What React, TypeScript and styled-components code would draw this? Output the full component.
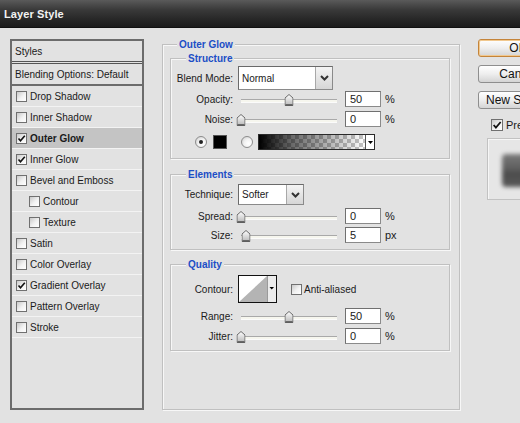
import * as React from 'react'
import styled, { createGlobalStyle, css } from 'styled-components'

const GlobalStyle = createGlobalStyle`
  html, body {
    margin: 0;
    padding: 0;
    background: #e2e2e2;
    overflow: hidden;
  }
  body {
    font-family: "Liberation Sans", Arial, sans-serif;
    font-size: 10px;
    color: #1a1a1a;
  }
`

const Window = styled.div`
  width: 520px;
  height: 423px;
  overflow: hidden;
  background: #e2e2e2;
`

const TitleBar = styled.div`
  height: 28px;
  box-sizing: border-box;
  padding-left: 4px;
  display: flex;
  align-items: center;
  background: linear-gradient(#5a5a5a 0%, #3a3a3a 35%, #282828 70%, #1c1c1c 100%);
  border-bottom: 1px solid #111;
  color: #f2f2f2;
  font-weight: bold;
  font-size: 11px;
  letter-spacing: 0.1px;
`

const Body = styled.div`
  display: flex;
  align-items: flex-start;
  padding: 11px 0 0 10px;
`

// left column
const StyleList = styled.div`
  flex-shrink: 0;
  width: 134px;
  height: 371px;
  box-sizing: border-box;
  border: 2px solid #6c6c6c;
  background: #e2e2e2;
`

const ListHeader = styled.div`
  height: 20px;
  padding-left: 3px;
  display: flex;
  align-items: center;
  border-bottom: 3px double #555;
`

const BlendRow = styled.div`
  height: 20px;
  padding-left: 3px;
  display: flex;
  align-items: center;
  border-bottom: 2px solid #6c6c6c;
`

const StyleItem = styled.div<{ $selected?: boolean; $indent?: boolean }>`
  height: 20px;
  display: flex;
  align-items: center;
  gap: 3px;
  padding-left: ${(p) => (p.$indent ? 17 : 4)}px;
  border-bottom: 1px solid #f3f3f3;
  background: ${(p) => (p.$selected ? '#c4c4c4' : 'transparent')};
  font-weight: ${(p) => (p.$selected ? 'bold' : 'normal')};
`

const CheckBoxBox = styled.span<{ $size?: number }>`
  flex-shrink: 0;
  width: ${(p) => p.$size ?? 11}px;
  height: ${(p) => p.$size ?? 11}px;
  box-sizing: border-box;
  border: 1px solid #707070;
  background: linear-gradient(135deg, #c9c9c9 0%, #f2f2f2 55%, #ffffff 100%);
  display: flex;
  align-items: center;
  justify-content: center;
`

function CheckBox({ checked, size }: { checked?: boolean; size?: number }) {
  const s = size ?? 11
  return (
    <CheckBoxBox $size={s}>
      {checked && (
        <svg width={s - 2} height={s - 2} viewBox="0 0 9 9">
          <polyline points="1.5,4.5 3.5,6.8 7.8,1.8" fill="none" stroke="#111" strokeWidth="1.6" />
        </svg>
      )}
    </CheckBoxBox>
  )
}

// main panel
const MainGroup = styled.div`
  flex-shrink: 0;
  margin: 5px 0 0 18px;
  width: 298px;
  height: 366px;
  box-sizing: border-box;
  border: 1px solid #c0c0c0;
  box-shadow: 1px 1px 0 #f7f7f7, inset 1px 1px 0 #f7f7f7;
`

const Legend = styled.div<{ $indent: number }>`
  display: table;
  margin: -7px 0 0 ${(p) => p.$indent}px;
  padding: 0 2px;
  line-height: 13px;
  background: #e2e2e2;
  color: #1c4ec6;
  font-weight: bold;
`

const Group = styled.div<{ $top: number; $bottom: number }>`
  margin: ${(p) => p.$top}px 0 0 7px;
  width: 280px;
  box-sizing: border-box;
  padding-bottom: ${(p) => p.$bottom}px;
  border: 1px solid #c0c0c0;
  box-shadow: 1px 1px 0 #f7f7f7, inset 1px 1px 0 #f7f7f7;
`

const Row = styled.div<{ $h: number; $mt: number; $pl?: number }>`
  display: flex;
  align-items: center;
  height: ${(p) => p.$h}px;
  margin-top: ${(p) => p.$mt}px;
  padding-left: ${(p) => p.$pl ?? 0}px;
`

const Label = styled.span`
  width: 62px;
  margin-right: 5px;
  text-align: right;
  white-space: nowrap;
`

const SelectBox = styled.div<{ $w: number }>`
  width: ${(p) => p.$w}px;
  height: 100%;
  box-sizing: border-box;
  display: flex;
  background: #fff;
  border: 1px solid #8a8a8a;
  border-top-color: #6a6a6a;
  border-left-color: #6a6a6a;
`

const SelectText = styled.span`
  flex: 1;
  display: flex;
  align-items: center;
  padding-left: 3px;
`

const SelectButton = styled.span`
  width: 16px;
  display: flex;
  align-items: center;
  justify-content: center;
  background: linear-gradient(#f4f4f4, #d6d6d6);
  border-left: 1px solid #a8a8a8;
`

function Select({ value, width }: { value: string; width: number }) {
  return (
    <SelectBox $w={width}>
      <SelectText>{value}</SelectText>
      <SelectButton>
        <svg width="9" height="6" viewBox="0 0 9 6">
          <polyline points="1,1 4.5,4.5 8,1" fill="none" stroke="#333" strokeWidth="2" />
        </svg>
      </SelectButton>
    </SelectBox>
  )
}

const SliderWrap = styled.div`
  position: relative;
  width: 96px;
  height: 16px;
  margin: 0 8px 0 3px;
`

const SliderTrack = styled.div`
  position: absolute;
  left: 0;
  right: 0;
  top: 8px;
  height: 2px;
  background: #f6f6ee;
  border-top: 1px solid #a9a9a9;
  border-bottom: 1px solid #fbfbfb;
`

const Thumb = styled.svg`
  position: absolute;
  top: 3px;
  transform: translateX(-50%);
`

function Slider({ pct }: { pct: number }) {
  return (
    <SliderWrap>
      <SliderTrack />
      <Thumb width="9" height="12" viewBox="0 0 9 12" style={{ left: `${pct}%` }}>
        <defs>
          <linearGradient id="thumbFill" x1="0" y1="0" x2="0" y2="1">
            <stop offset="0" stopColor="#ffffff" />
            <stop offset="1" stopColor="#b8b8b8" />
          </linearGradient>
        </defs>
        <path d="M0.5 11.5 V4 L4.5 0.5 L8.5 4 V11.5 Z" fill="url(#thumbFill)" stroke="#6a6a6a" />
        <line x1="1" y1="10.8" x2="8" y2="10.8" stroke="#444" />
      </Thumb>
    </SliderWrap>
  )
}

const NumberField = styled.div`
  width: 36px;
  height: 16px;
  box-sizing: border-box;
  padding-left: 4px;
  display: flex;
  align-items: center;
  background: #fff;
  border: 1px solid #8a8a8a;
  border-top-color: #707070;
  border-left-color: #707070;
  font-size: 11px;
`

const Unit = styled.span`
  margin-left: 4px;
  font-size: 11px;
`

function SliderRow({ label, pct, value, unit, mt }: { label: string; pct: number; value: string; unit: string; mt: number }) {
  return (
    <Row $h={16} $mt={mt}>
      <Label>{label}</Label>
      <Slider pct={pct} />
      <NumberField>{value}</NumberField>
      <Unit>{unit}</Unit>
    </Row>
  )
}

const Radio = styled.span<{ $on?: boolean }>`
  flex-shrink: 0;
  width: 12px;
  height: 12px;
  box-sizing: border-box;
  border-radius: 50%;
  border: 1px solid #8c8c8c;
  background: radial-gradient(circle at 65% 65%, #ffffff 0%, #f2f2f2 45%, #c8c8c8 100%);
  display: flex;
  align-items: center;
  justify-content: center;
  ${(p) =>
    p.$on &&
    css`
      &::after {
        content: '';
        width: 4px;
        height: 4px;
        border-radius: 50%;
        background: #222;
      }
    `}
`

const Swatch = styled.span`
  width: 14px;
  height: 14px;
  box-sizing: border-box;
  margin: 0 14px 0 6px;
  background: #000;
  border: 1px solid #555;
`

const GradientBar = styled.div`
  width: 117px;
  height: 16px;
  margin-left: 5px;
  box-sizing: border-box;
  display: flex;
  border: 1px solid #2a2a2a;
`

const GradientFill = styled.span`
  flex: 1;
  background: linear-gradient(to right, #000 0%, rgba(0, 0, 0, 0.6) 30%, rgba(0, 0, 0, 0) 100%),
    repeating-conic-gradient(#c4c4c4 0 25%, #ffffff 0 50%) 0 0 / 8px 8px;
`

const GradientArrow = styled.span`
  width: 8px;
  display: flex;
  align-items: center;
  justify-content: center;
  background: #fff;
  border-left: 1px solid #555;
`

const ContourBox = styled.svg`
  display: block;
  margin-right: 14px;
`

const AntiLabel = styled.span`
  margin-left: 2px;
`

// right column
const SideColumn = styled.div`
  flex-shrink: 0;
  width: 90px;
  margin-left: 18px;
  display: flex;
  flex-direction: column;
`

const Button = styled.div<{ $default?: boolean; $mt?: number }>`
  width: 80px;
  height: 18px;
  box-sizing: border-box;
  margin-top: ${(p) => p.$mt ?? 0}px;
  display: flex;
  align-items: center;
  justify-content: center;
  border-radius: 3px;
  border: 1px solid ${(p) => (p.$default ? '#c4843a' : '#8e8e8e')};
  background: linear-gradient(#ffffff 0%, #eeeeee 50%, #d4d4d4 100%);
  box-shadow: ${(p) => (p.$default ? 'inset 0 0 0 1px #f1c88e' : 'none')};
  font-size: 12px;
  color: #111;
`

const PreviewToggle = styled.div`
  display: flex;
  align-items: center;
  gap: 3px;
  margin-top: 9px;
  padding-left: 13px;
  height: 13px;
  font-size: 11px;
`

const PreviewBox = styled.div`
  margin: 7px 0 0 9px;
  width: 80px;
  height: 62px;
  box-sizing: border-box;
  padding: 15px 0 0 14px;
  background: #e6e6e6;
  border: 1px solid #c2c2c2;
  box-shadow: inset 1px 1px 0 #f6f6f6;
`

const PreviewSwatch = styled.div`
  width: 40px;
  height: 33px;
  border-radius: 4px;
  background: linear-gradient(#7a7a7a 0%, #5e5e5e 45%, #4c4c4c 60%, #5a5a5a 100%);
  filter: blur(2px);
`

const styleItems = [
  { name: 'Drop Shadow' },
  { name: 'Inner Shadow' },
  { name: 'Outer Glow', checked: true, selected: true },
  { name: 'Inner Glow', checked: true },
  { name: 'Bevel and Emboss' },
  { name: 'Contour', indent: true },
  { name: 'Texture', indent: true },
  { name: 'Satin' },
  { name: 'Color Overlay' },
  { name: 'Gradient Overlay', checked: true },
  { name: 'Pattern Overlay' },
  { name: 'Stroke' },
]

export default function App() {
  return (
    <>
      <GlobalStyle />
      <Window>
        <TitleBar>Layer Style</TitleBar>
        <Body>
          <StyleList>
            <ListHeader>Styles</ListHeader>
            <BlendRow>Blending Options: Default</BlendRow>
            {styleItems.map((item) => (
              <StyleItem key={item.name} $selected={item.selected} $indent={item.indent}>
                <CheckBox checked={item.checked} />
                {item.name}
              </StyleItem>
            ))}
          </StyleList>

          <MainGroup>
            <Legend $indent={14}>Outer Glow</Legend>

            <Group $top={7} $bottom={8}>
              <Legend $indent={15}>Structure</Legend>
              <Row $h={24} $mt={1}>
                <Label>Blend Mode:</Label>
                <Select value="Normal" width={95} />
              </Row>
              <SliderRow label="Opacity:" pct={50} value="50" unit="%" mt={1} />
              <SliderRow label="Noise:" pct={0} value="0" unit="%" mt={4} />
              <Row $h={16} $mt={7} $pl={24}>
                <Radio $on />
                <Swatch />
                <Radio />
                <GradientBar>
                  <GradientFill />
                  <GradientArrow>
                    <svg width="5" height="3" viewBox="0 0 5 3">
                      <polygon points="0,0 5,0 2.5,3" fill="#000" />
                    </svg>
                  </GradientArrow>
                </GradientBar>
              </Row>
            </Group>

            <Group $top={15} $bottom={6}>
              <Legend $indent={15}>Elements</Legend>
              <Row $h={21} $mt={3}>
                <Label>Technique:</Label>
                <Select value="Softer" width={66} />
              </Row>
              <SliderRow label="Spread:" pct={0} value="0" unit="%" mt={3} />
              <SliderRow label="Size:" pct={5} value="5" unit="px" mt={3} />
            </Group>

            <Group $top={14} $bottom={6}>
              <Legend $indent={15}>Quality</Legend>
              <Row $h={28} $mt={4}>
                <Label>Contour:</Label>
                <ContourBox width="39" height="28" viewBox="0 0 39 28">
                  <rect x="0.5" y="0.5" width="38" height="27" fill="#fff" stroke="#111" />
                  <polygon points="29,1 29,27 1,27" fill="#b4b4b4" />
                  <rect x="29" y="1" width="9" height="26" fill="#ececec" />
                  <line x1="29.5" y1="1" x2="29.5" y2="27" stroke="#9a9a9a" />
                  <polygon points="31.5,12 36,12 33.75,14.5" fill="#000" />
                </ContourBox>
                <CheckBox />
                <AntiLabel>Anti-aliased</AntiLabel>
              </Row>
              <SliderRow label="Range:" pct={50} value="50" unit="%" mt={5} />
              <SliderRow label="Jitter:" pct={0} value="0" unit="%" mt={4} />
            </Group>
          </MainGroup>

          <SideColumn>
            <Button $default>OK</Button>
            <Button $mt={8}>Cancel</Button>
            <Button $mt={8}>New Style...</Button>
            <PreviewToggle>
              <CheckBox checked size={12} />
              Preview
            </PreviewToggle>
            <PreviewBox>
              <PreviewSwatch />
            </PreviewBox>
          </SideColumn>
        </Body>
      </Window>
    </>
  )
}
